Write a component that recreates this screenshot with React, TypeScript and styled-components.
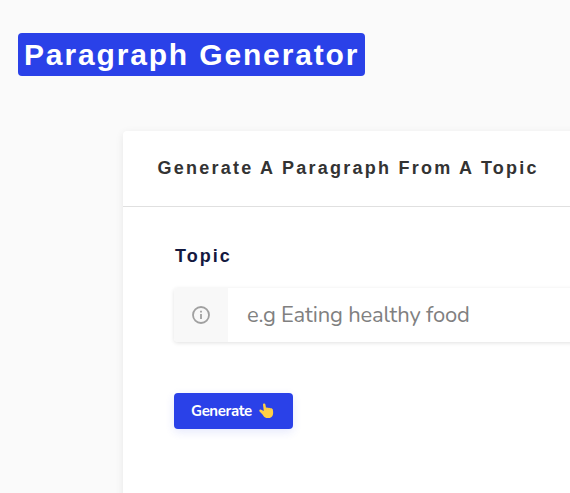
import React from "react";
import styled, { createGlobalStyle } from "styled-components";

const GlobalStyle = createGlobalStyle`
  *, *::before, *::after { box-sizing: border-box; }
  html, body { margin: 0; background: #fafafa; overflow: hidden; }
`;

const Page = styled.main`
  height: 493px;
  overflow: hidden;
  padding: 33px 0 0 18px;
  background: #fafafa;
  font-family: "Liberation Sans", Arial, sans-serif;
`;

const Title = styled.h1`
  width: 347px;
  height: 43px;
  margin: 0;
  padding-left: 6px;
  border-radius: 4px;
  background: #2a41e8;
  color: #fff;
  font-size: 30px;
  line-height: 44px;
  letter-spacing: 1.85px;
  white-space: nowrap;
`;

const Card = styled.section`
  width: 600px;
  height: 400px;
  margin: 55px 0 0 105px;
  border-radius: 4px;
  background: #fff;
  box-shadow: 0 2px 8px rgba(0, 0, 0, 0.08);
`;

const CardHeader = styled.header`
  height: 76px;
  padding-left: 34.5px;
  border-bottom: 1px solid #e0e0e0;
`;

const CardTitle = styled.h2`
  margin: 0;
  color: #333;
  font-size: 18px;
  line-height: 74px;
  letter-spacing: 2.25px;
  white-space: nowrap;
`;

const Form = styled.form`
  padding: 36px 0 0 51px;
`;

const Label = styled.label`
  display: block;
  height: 45px;
  padding-left: 1px;
  color: #14193f;
  font-size: 18px;
  font-weight: 700;
  line-height: 27px;
  letter-spacing: 2px;
`;

const Field = styled.div`
  display: flex;
  height: 54px;
  border-radius: 4px;
  background: #fff;
  box-shadow: 0 1px 4px rgba(0, 0, 0, 0.12);
`;

const FieldIcon = styled.span`
  display: flex;
  align-items: center;
  justify-content: center;
  flex: 0 0 54px;
  border-radius: 4px 0 0 4px;
  background: #f8f8f8;
`;

const Input = styled.input`
  flex: 1;
  min-width: 0;
  padding: 0 0 0 19px;
  border: 0;
  outline: 0;
  background: transparent;
  font: 400 22px Nunito, Lato, sans-serif;
  letter-spacing: -0.18px;
  &::placeholder { color: #808080; opacity: 1; }
`;

const Button = styled.button`
  display: flex;
  align-items: center;
  width: 119px;
  height: 36px;
  margin: 51px 0 0;
  padding: 0 0 0 17px;
  gap: 7px;
  border: 0;
  border-radius: 4px;
  background: #2a41e8;
  box-shadow: 0 3px 10px rgba(42, 65, 232, 0.12);
  color: #fff;
  font: 700 15px Nunito, Lato, sans-serif;
`;

const ButtonText = styled.span`
  width: 61px;
  letter-spacing: -0.4px;
  text-align: left;
  white-space: nowrap;
`;

const InfoIcon = () => (
  <svg width="20" height="20" viewBox="0 0 20 20" fill="none" stroke="#a0a0a0" strokeWidth="1.8">
    <circle cx="10" cy="10" r="8" />
    <path d="M10 9v5M10 5.8v1.8" />
  </svg>
);

const HandIcon = () => (
  <svg width="15" height="16" viewBox="0 0 15 16">
    <path
      d="M4 1.8C3.8.2 6 0 6.4 1.6l.6 3.1c.8-.5 1.7-.4 2.2.2.8-.4 1.6-.2 2 .4 1.2-.4 2.4.2 2.6 1.3.7 3.4.4 5.9-1.3 7.3-1.8 1.5-5 1.5-6.7.3-1.1-.8-1.5-1.6-2.3-2.8L.6 8.5C-.2 7.2 1 6.2 2.2 6.8l2.6 1.3z"
      fill="#ffd045"
    />
    <path d="M7 4.9l.3 1.8M9.2 5.1l.2 1.7M11.2 5.4l.2 1.6" stroke="#f0b83a" strokeWidth=".4" fill="none" />
  </svg>
);

export default function App() {
  return (
    <>
      <GlobalStyle />
      <Page>
        <Title>Paragraph Generator</Title>
        <Card>
          <CardHeader>
            <CardTitle>Generate A Paragraph From A Topic</CardTitle>
          </CardHeader>
          <Form onSubmit={(event) => event.preventDefault()}>
            <Label htmlFor="topic">Topic</Label>
            <Field>
              <FieldIcon><InfoIcon /></FieldIcon>
              <Input id="topic" placeholder="e.g Eating healthy food" />
            </Field>
            <Button type="submit">
              <ButtonText>Generate</ButtonText>
              <HandIcon />
            </Button>
          </Form>
        </Card>
      </Page>
    </>
  );
}
